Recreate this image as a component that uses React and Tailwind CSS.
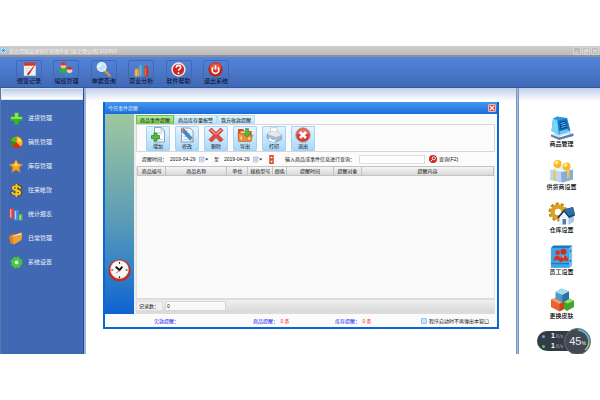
import { useState } from 'react';

const NAV = [
  ['进货管理', PlusIcon],
  ['销售管理', PieIcon],
  ['库存管理', StarIcon],
  ['往来帐款', DollarIcon],
  ['统计报表', BarsIcon],
  ['日常管理', FolderIcon],
  ['系统设置', GearIcon],
];

const TOOLS = [
  ['便签记录', NoteIcon],
  ['编班管理', PeopleIcon],
  ['单据查询', LensIcon],
  ['营业分析', ChartIcon],
  ['软件帮助', HelpIcon],
  ['退出系统', PowerIcon],
];

const SHORTCUTS = [
  ['商品管理', ComputerIcon],
  ['供货商设置', SupplierIcon],
  ['仓库设置', WarehouseIcon],
  ['员工设置', StaffIcon],
  ['更换皮肤', CubesIcon],
];

const ACTIONS = [
  ['增加', AddPageIcon],
  ['修改', EditPageIcon],
  ['删除', DeleteIcon],
  ['导出', ExportIcon],
  ['打印', PrinterIcon],
  ['退出', CloseIcon],
];

const TABS = ['商品事件提醒', '商品库存量报警', '我方收款提醒'];

const COLUMNS = [
  ['商品编号', 'w-[8%]'],
  ['商品名称', 'w-[17%]'],
  ['单位', 'w-[6%]'],
  ['规格型号', 'w-[7%]'],
  ['颜色', 'w-[4%]'],
  ['提醒时间', 'w-[13%]'],
  ['提醒对象', 'w-[8%]'],
  ['提醒内容', 'w-[37%]'],
];

function PlusIcon() {
  return (
    <svg viewBox="0 0 24 24" className="size-[13px]">
      <path d="M8 1h8v7h7v8h-7v7H8v-7H1V8h7z" fill="#35b528" />
      <path d="M9 2h6v7h7v4H2V9h7z" fill="#86e552" />
    </svg>
  );
}

function PieIcon() {
  return (
    <svg viewBox="0 0 24 24" className="size-[13px]">
      <circle cx="12" cy="12" r="11" fill="#d0301a" />
      <path d="M12 12V1a11 11 0 0 0-10.500 8z" fill="#5eb520" />
      <path d="M1.500 9 12 12 4 20A11 11 0 0 1 1.500 9" fill="#378f13" />
      <path d="M12 12V1a11 11 0 0 1 8 18.500z" fill="#f6b71c" />
      <path d="M14 3a9 9 0 0 1 7 8l-7 0z" fill="#ffdc62" />
    </svg>
  );
}

function StarIcon() {
  return (
    <svg viewBox="0 0 24 24" className="size-[14px]">
      <path d="m12 1 3.300 7.500 8 .8-6 5.400 1.800 8L12 18.500 4.900 22.700l1.800-8-6-5.400 8-.8z" fill="#f9a51a" stroke="#e88c12" />
      <path d="m12 3 2.500 6 5.500 1-8 3-8-3 5.500-1z" fill="#ffd250" />
    </svg>
  );
}

function DollarIcon() {
  return (
    <svg viewBox="0 0 24 24" className="size-[13px]">
      <g fill="none" strokeLinecap="round">
        <path d="M20 7c-2-4-14-4-15 0s14 5 15 9-14 5-17 0M13 1v22" stroke="#423413" strokeWidth="5" />
        <path d="M19 7c-2-4-13-4-14 0s14 5 14 9-13 5-15 0M12 1v22" stroke="#ffc91c" strokeWidth="3.500" />
      </g>
    </svg>
  );
}

function BarsIcon() {
  return (
    <svg viewBox="0 0 24 24" className="size-[14px]">
      <rect x="1" y="2" width="7" height="18" rx="1" fill="#e34343" />
      <rect x="9" y="5" width="7" height="18" rx="1" fill="#4495e4" />
      <rect x="17" y="12" width="6" height="11" rx="1" fill="#61bd38" />
      <path d="M3 4v14M11 7v14M19 14v8" stroke="#fff" strokeOpacity=".6" strokeWidth="2" />
    </svg>
  );
}

function FolderIcon() {
  return (
    <svg viewBox="0 0 24 24" className="size-[14px]">
      <path d="m1 8 7-4 3 2 11-4v13L8 23 2 20z" fill="#c57020" />
      <path d="m4 9 17-6-1 12-14 6z" fill="#fff0c5" />
      <path d="M1 9h6l16-4-2 11-13 7-6-3z" fill="#eda33d" />
      <path d="m1 9 6 1 1 13-6-3z" fill="#d98428" />
    </svg>
  );
}

function GearIcon() {
  return (
    <svg viewBox="0 0 24 24" className="size-[13px]">
      <circle cx="12" cy="12" r="9.500" fill="none" stroke="#3fb934" strokeWidth="4" strokeDasharray="4 3.460" />
      <circle cx="12" cy="12" r="6.500" fill="none" stroke="#4fc440" strokeWidth="6" />
      <circle cx="12" cy="12" r="3.500" fill="#e5f6e0" />
    </svg>
  );
}

function NoteIcon() {
  return (
    <svg viewBox="0 0 24 24" className="size-[15px]">
      <path d="M3 2h19v20H3z" fill="#f3f1ee" />
      <path d="M3 1h19v5H3z" fill="#d7352b" />
      <path d="m19 7-8 13-2 1 .5-3z" fill="#c91f1b" stroke="#c91f1b" />
      <path d="M5 10h8M5 14h5" stroke="#c8c8c8" />
    </svg>
  );
}

function PeopleIcon() {
  return (
    <svg viewBox="0 0 24 24" className="size-[15px]">
      <path d="M0 17c0-5 3-7 7-7s6 3 6 7z" fill="#28b92b" />
      <circle cx="7" cy="6" r="4.500" fill="#f4bd8c" />
      <path d="M2 5c1-6 9-6 10 0z" fill="#db3624" />
      <path d="M9 23c0-5 3-6 7-6s7 2 7 6z" fill="#3d7fe0" />
      <circle cx="17" cy="13" r="4.500" fill="#f9cda4" />
      <path d="M12 12c1-6 9-6 10 0z" fill="#c8301c" />
    </svg>
  );
}

function LensIcon() {
  return (
    <svg viewBox="0 0 24 24" className="size-[15px]">
      <path d="m13 13 9 9" stroke="#d59a45" strokeWidth="3.500" strokeLinecap="round" />
      <circle cx="9" cy="8" r="7" fill="#bfe3fb" stroke="#eaf5fd" strokeWidth="2" />
      <path d="M5 8c0-3 2-4 4-4" fill="none" stroke="#fff" strokeWidth="2" />
    </svg>
  );
}

function ChartIcon() {
  return (
    <svg viewBox="0 0 24 24" className="size-[15px]">
      <path d="m1 12 3-2 4 1v12H1z" fill="#e99b32" />
      <path d="m8 4 3-2 5 1v20H8z" fill="#3c8fc5" />
      <path d="m16 8 3-2 4 1v16h-7z" fill="#c9382d" />
      <path d="M2 13h3v9H2zM9 5h3v17H9zM17 9h2v13h-2z" fill="#fff" fillOpacity=".3" />
    </svg>
  );
}

function HelpIcon() {
  return (
    <svg viewBox="0 0 24 24" className="size-[15px]">
      <circle cx="12" cy="12" r="11.500" fill="#eee3e1" />
      <circle cx="12" cy="12" r="9" fill="#cf2622" />
      <path d="M8.500 9c0-5 7-4.500 7-.5 0 3-3.500 2.500-3.500 5.500M12 16.500V19" fill="none" stroke="#fff" strokeWidth="2.500" />
    </svg>
  );
}

function PowerIcon() {
  return (
    <svg viewBox="0 0 24 24" className="size-[15px]">
      <circle cx="12" cy="12" r="11.500" fill="#c0261c" />
      <ellipse cx="12" cy="8" rx="9" ry="6" fill="#e4543f" />
      <path d="M8.500 8.500a5.500 5.500 0 1 0 7 0M12 5v7" fill="none" stroke="#fff" strokeWidth="2.500" />
    </svg>
  );
}

function AddPageIcon() {
  return (
    <svg viewBox="0 0 32 32" className="size-[16px]">
      <path d="M9 1h14l6 6v23H9z" fill="#f8fbfd" stroke="#6e89a3" strokeWidth="1.500" />
      <path d="M22 1v7h7M13 12h11M13 25h12" fill="none" stroke="#9fb6cb" strokeWidth="1.500" />
      <path d="M8 12h6v5h5v6h-5v5H8v-5H3v-6h5z" fill="#57bb37" stroke="#2e8321" strokeWidth="1.500" />
    </svg>
  );
}

function EditPageIcon() {
  return (
    <svg viewBox="0 0 32 32" className="size-[16px]">
      <path d="M5 2h17l6 6v22H5z" fill="#eef6fc" stroke="#6e89a3" strokeWidth="1.500" />
      <path d="M9 8h9M9 13h14M9 19h14M9 25h14" stroke="#a9c2d8" strokeWidth="1.500" />
      <path d="m4 7 5-4 18 19 1 7-6-3z" fill="#3d8bcf" stroke="#245b94" />
      <path d="m4 7 5-4 3 3-5 5z" fill="#e1754e" />
      <path d="m22 26 5-4 1 7z" fill="#f3d19b" />
    </svg>
  );
}

function DeleteIcon() {
  return (
    <svg viewBox="0 0 32 32" className="size-[16px]">
      <path d="m7 2 9 9 9-9 5 5-9 9 9 9-5 5-9-9-9 9-5-5 9-9-9-9z" fill="#e04a3f" stroke="#c0302a" strokeWidth="1.500" />
      <path d="m7 4 9 10 9-10 2 3-9 8h-4L5 7z" fill="#f59a8f" />
    </svg>
  );
}

function ExportIcon() {
  return (
    <svg viewBox="0 0 32 32" className="size-[16px]">
      <path d="M2 4h10l3 4h14v19H2z" fill="#d24a2a" />
      <path d="M7 9h18v14H7z" fill="#fff5d4" />
      <path d="M2 12h9l3 4h17l-3 13H3z" fill="#eb8e38" stroke="#b7482a" />
      <path d="M17 3h6v9h5l-8 9-8-9h5z" fill="#58b832" stroke="#2b8420" />
      <path d="M7 19h3v6H7zM22 21h5v4h-5z" fill="#ffe49b" />
    </svg>
  );
}

function PrinterIcon() {
  return (
    <svg viewBox="0 0 32 32" className="size-[16px]">
      <path d="m9 2 12-1 3 13H9z" fill="#fff" stroke="#9cabb9" />
      <path d="m2 14 7-4h15l7 6v9l-11 5-18-8z" fill="#aeb9c5" stroke="#6f7f90" />
      <path d="m2 14 18 6 11-4-7-6H9z" fill="#e3e9ee" />
      <path d="m8 20 13 5-5 6-12-4z" fill="#fff" stroke="#7fa3c8" />
      <path d="m10 23 7 2" stroke="#4c8bd0" strokeWidth="2" />
    </svg>
  );
}

function CloseIcon() {
  return (
    <svg viewBox="0 0 32 32" className="size-[16px]">
      <circle cx="16" cy="16" r="14.500" fill="#d63b32" stroke="#b7aaa9" strokeWidth="2" />
      <path d="M4 14a12 11 0 0 1 24 0c-8 3-16 3-24 0" fill="#ea6e61" />
      <path d="m10 10 12 12m0-12L10 22" stroke="#fff" strokeWidth="5" />
    </svg>
  );
}

function ComputerIcon() {
  return (
    <svg viewBox="0 0 48 48" className="size-[24px]">
      <path d="m2 37 31-9 14 8-29 11z" fill="#c9e1f5" />
      <path d="m2 37 16 6 29-8v5L18 48 2 41z" fill="#5b7fad" />
      <path d="M6 5 14 1l20 3 7 26-24 7L3 30z" fill="#249cdb" />
      <path d="m6 5 9 4 3 28L3 30z" fill="#77d5f5" />
      <path d="m15 9 19-4 6 24-22 8z" fill="#1c76c4" />
      <path d="m19 12 12-3 4 14-14 4z" fill="#0d3f8b" />
      <path d="m21 15 9-2m-8 6 10-3m-9 7 10-3" stroke="#54c6f1" strokeWidth="2" />
      <path d="m18 31 18-5 3 5-19 6z" fill="#68c7ec" />
      <path d="m21 41 16-5" stroke="#fff" strokeWidth="2" />
    </svg>
  );
}

function SupplierIcon() {
  return (
    <svg viewBox="0 0 48 48" className="size-[24px]">
      <path d="M1 22 16 16l30 6v19l-21 6-24-5z" fill="#9fc4e8" />
      <path d="m1 22 21 3v20L1 41z" fill="#bdd9f2" />
      <path d="m22 25 24-4v20l-22 6z" fill="#86aedd" />
      <path d="m1 22 15-6 30 5-22 5z" fill="#e5f1fb" />
      <path d="M7 22h4v20l-4-1zM34 24h5v14l-2-2-3 5z" fill="#f4c433" />
      <circle cx="15" cy="10" r="8" fill="#f7b91d" />
      <circle cx="33" cy="15" r="8" fill="#f7b91d" />
      <circle cx="13" cy="7" r="4" fill="#ffe78c" />
      <circle cx="31" cy="12" r="4" fill="#ffe78c" />
    </svg>
  );
}

function WarehouseIcon() {
  return (
    <svg viewBox="0 0 54 48" className="h-[24px] w-[27px]">
      <circle cx="20" cy="20" r="16" fill="none" stroke="#b98715" strokeWidth="6" strokeDasharray="6 4.050" />
      <circle cx="20" cy="20" r="11" fill="none" stroke="#dca023" strokeWidth="9" />
      <path d="m23 30 9-11 14 11v14l-24 3z" fill="#edf4fb" />
      <path d="m41 30 11-3v12l-11 7z" fill="#a9c8e6" />
      <path d="m18 31 14-16 18-5 4 17-12 5-10-12-11 13z" fill="#1a3f68" />
      <path d="m32 15 18-5 4 14-12 4z" fill="#2f6ca6" />
      <path d="M29 34h7v11h-7z" fill="#497fb7" />
    </svg>
  );
}

function StaffIcon() {
  return (
    <svg viewBox="0 0 48 48" className="size-[23px]">
      <path d="m2 6 5-5h39v41l-5 5H2z" fill="#1678bf" />
      <path d="M2 6h38v41H2z" fill="#36a8e5" />
      <path d="M40 6 46 1v41l-6 5z" fill="#7cc3ea" />
      <circle cx="16" cy="16" r="5" fill="#e22e25" />
      <circle cx="28" cy="14" r="6" fill="#d9251e" />
      <path d="M7 33c2-12 9-14 15-6 8-10 15-4 17 7l-10-2-7 4-6-5z" fill="#df2b22" />
      <path d="m27 20 2 8-3-3z" fill="#fff" />
      <path d="M2 39h38" stroke="#1672b5" strokeWidth="2" />
      <path d="M43 10v5m0 16v5" stroke="#24618d" strokeWidth="2" />
    </svg>
  );
}

function CubesIcon() {
  return (
    <svg viewBox="0 0 48 48" className="size-[24px]">
      <path d="m24 25 12-5 12 5v13l-14 8-10-7z" fill="#43a530" />
      <path d="m24 25 12-5 12 5-13 6z" fill="#a0df69" />
      <path d="m2 23 12-4 14 8v15l-9 5L2 38z" fill="#e8622f" />
      <path d="m2 23 12-4 14 8-9 5z" fill="#ff9c65" />
      <path d="m19 32 9-5v15l-9 5z" fill="#c8431f" />
      <path d="M11 8 23 1l15 6v15l-13 7-14-7z" fill="#4b9bc8" />
      <path d="m11 8 12-7 15 6-13 7z" fill="#a6dcf0" />
      <path d="m25 14 13-7v15l-13 7z" fill="#2c719f" />
    </svg>
  );
}

function Clock() {
  return (
    <svg viewBox="0 0 48 48" className="size-[23px]">
      <circle cx="24" cy="24" r="23" fill="#bd2c25" />
      <circle cx="24" cy="22" r="19" fill="#f7f7f5" stroke="#e8aaa3" />
      <path d="M24 6v4m0 26v4M7 23h4m26 0h4" stroke="#222" strokeWidth="2.500" />
      <path d="m16 16 8 7 6-7" fill="none" stroke="#111" strokeWidth="4" />
      <path d="m24 23-7 7" stroke="#e33" strokeWidth="2" />
    </svg>
  );
}

function WindowButtons() {
  return (
    <div className="flex gap-px">
      {['最小化', '还原', '关闭'].map((name, i) => (
        <button key={name} aria-label={name} className="flex h-[8px] w-[8px] items-center justify-center rounded-[1px] border border-[#d6d6d6] bg-[#bcbcbc]">
          <svg viewBox="0 0 8 8" className="size-[6px] fill-none stroke-[#eee]">
            {i === 0 && <path d="M2 6h3" />}
            {i === 1 && <path d="M1.500 3.500h3v3h-3zM3.500 3V1.500h3v3H5" />}
            {i === 2 && <path d="m1.500 1.500 5 5m0-5-5 5" />}
          </svg>
        </button>
      ))}
    </div>
  );
}

function DateField({ label }) {
  return (
    <div className="flex w-[43px] items-center justify-between bg-white px-[2px]">
      <input aria-label={label} defaultValue="2019-04-29" className="w-[28px] bg-transparent outline-none" />
      <svg viewBox="0 0 20 14" className="h-[7px] w-[10px]">
        <path d="M1 2h9v10H1z" fill="#fff" stroke="#788ba5" />
        <path d="M1 4h9M3 7h5M3 9h5" stroke="#788ba5" />
        <path d="M12 5h7l-3.500 4z" fill="#26436c" />
      </svg>
    </div>
  );
}

function ReminderDialog() {
  const [tab, setTab] = useState(0);

  return (
    <section className="mx-[17px] mt-[14px] border-2 border-t-0 border-[#0d65d6] bg-[#fbfbfc] text-[5px] leading-[8px] text-[#111]">
      <header className="flex h-[12px] items-center justify-between bg-linear-to-b from-[#4596ef] to-[#1a6cd9] pr-px pl-[3px]">
        <h2 className="text-[#d8ebff]">今日事件提醒</h2>
        <button aria-label="关闭" className="flex h-[8px] w-[8px] items-center justify-center rounded-[1px] border border-[#e9b5b5] bg-[#d9403c]">
          <svg viewBox="0 0 8 8" className="size-[6px]"><path d="m1 1 6 6m0-6L1 7" stroke="#fff" strokeWidth="1.500" /></svg>
        </button>
      </header>

      <div className="flex h-[200px]">
        <div className="flex w-[29px] shrink-0 items-end justify-center bg-linear-to-b from-[#9fc79f] via-[#5f9fb4] via-50% to-[#0b62d2] pb-[32px]">
          <Clock />
        </div>

        <div className="flex min-w-0 flex-1 flex-col border-l-2 border-[#ececec] pr-[2px]">
          <div className="flex h-[10px] items-end">
            {TABS.map((name, i) => (
              <button
                key={name}
                onClick={() => setTab(i)}
                className={`h-[9px] border border-b-0 px-[3px] leading-[8px] ${
                  tab === i
                    ? 'border-[#6cc04c] bg-linear-to-b from-[#b9ec9d] to-[#7bd351]'
                    : 'border-[#b9def3] bg-linear-to-b from-[#e2f4fd] to-[#b5dff8]'
                }`}
              >
                {name}
              </button>
            ))}
          </div>

          <div className="flex h-[28px] gap-[5px] border border-[#d7d7d7] bg-[#fcfcfc] px-[9px] pt-px">
            {ACTIONS.map(([name, Icon]) => (
              <button key={name} className="flex h-[25px] w-[24px] shrink-0 flex-col items-center rounded-[1px] border border-[#a5d2f2] bg-linear-to-b from-[#e6f5ff] to-[#a8d8fa]">
                <Icon />
                <span className="leading-[7px]">{name}</span>
              </button>
            ))}
          </div>

          <form className="flex h-[14px] items-center whitespace-nowrap pl-[6px]" onSubmit={(e) => e.preventDefault()}>
            <span className="mr-px w-[25px]">提醒时间：</span>
            <DateField label="开始日期" />
            <span className="mx-[3px]">至</span>
            <DateField label="结束日期" />
            <svg viewBox="0 0 10 20" className="ml-[4px] h-[9px] w-[5px]">
              <rect width="10" height="20" rx="1" fill="#db4a24" />
              <path d="M3 4h4v3H3zM2 13h6l-3 4z" fill="#fff" />
            </svg>
            <label htmlFor="keyword" className="ml-[11px]">输入商品或事件信息进行查询：</label>
            <input id="keyword" className="ml-[4px] h-[9px] w-[66px] shrink border border-[#dedede] bg-white px-[2px] outline-none" />
            <button className="ml-[4px] flex items-center gap-[2px]">
              <svg viewBox="0 0 16 16" className="size-[8px]">
                <circle cx="8" cy="8" r="8" fill="#c9261e" />
                <circle cx="9.500" cy="6.500" r="3.200" fill="none" stroke="#fff" strokeWidth="1.800" />
                <path d="m7 9-4 4" stroke="#fff" strokeWidth="2" />
              </svg>
              查询(F2)
            </button>
          </form>

          <div className="flex-1 border-x border-[#e2e2e2] bg-[#fafafa]">
            <table className="w-full table-fixed border-collapse">
              <thead>
                <tr className="h-[9px] bg-linear-to-b from-[#f5f5f5] to-[#d6d6d6]">
                  {COLUMNS.map(([name, width]) => (
                    <th key={name} className={`border border-[#c3c3c3] p-0 text-center font-normal leading-[8px] whitespace-nowrap ${width}`}>
                      {name}
                    </th>
                  ))}
                </tr>
              </thead>
              <tbody />
            </table>
          </div>

          <div className="flex h-[16px] items-center border-y-2 border-[#dcdcdc] bg-linear-to-b from-[#f0f0f0] to-[#d9d9d9]">
            <span className="w-[27px] border border-[#dedede] bg-[#f1f1f1] pl-[2px]">记录数：</span>
            <output className="ml-[2px] w-[61px] border border-[#d6d6d6] bg-[#f8f8f8] pl-px">0</output>
          </div>
        </div>
      </div>

      <footer className="flex h-[13px] items-center whitespace-nowrap text-[#1010f0]">
        <span className="ml-[49px] w-[99px]">欠款提醒：</span>
        <span className="w-[82px]">商品提醒： <span className="ml-px text-[#f22]">0 条</span></span>
        <span>库存提醒： <span className="ml-px text-[#f22]">0 条</span></span>
        <label className="mr-[8px] ml-auto flex items-center gap-[2px] text-[#111]">
          <input type="checkbox" className="size-[6px] appearance-none rounded-[1px] border border-[#8fc3ea] bg-[#c9e6fa] checked:bg-[#3a8fd8]" />
          程序启动时不再弹出本窗口
        </label>
      </footer>
    </section>
  );
}

function SpeedRow({ dot }) {
  return (
    <span className="flex items-center gap-[6px]">
      <i className={`size-[3px] rounded-full ${dot}`} />
      <span><b>1</b><small className="ml-px text-[5px] text-[#a3a9b1]">K/s</small></span>
    </span>
  );
}

function SpeedBall() {
  return (
    <div className="absolute right-[9px] bottom-0 flex h-[26px] w-[54px] items-center overflow-hidden text-white">
      <div className="flex h-[20px] w-[38px] flex-col justify-center rounded-l-full bg-[#343b46] pl-[5px] text-[7px] leading-[9px]">
        <SpeedRow dot="bg-[#46b8f2]" />
        <SpeedRow dot="bg-[#43cf4d]" />
      </div>
      <div className="absolute top-0 right-0 flex size-[27px] items-center justify-center rounded-full border border-[#687079] bg-[#414954] text-[11px] leading-none text-[#eee]">
        45<small className="mt-[4px] text-[5px]">%</small>
        <svg viewBox="0 0 27 27" className="absolute -inset-px size-[27px]">
          <path d="M14 2a11.500 11.500 0 0 1 11 11" fill="none" stroke="#4fc3d0" strokeWidth="1.500" />
          <path d="M25 13a11.500 11.500 0 0 1-4 9" fill="none" stroke="#9fce7c" strokeWidth="1.500" />
        </svg>
      </div>
    </div>
  );
}

export default function App() {
  return (
    <div className="bg-white pt-[46px] font-['Liberation_Sans','Noto_Sans_CJK_SC',sans-serif] text-[6px] leading-[8px]">
      <header className="flex h-[11px] items-center justify-between border-b-2 border-[#8b8f96] bg-linear-to-b from-[#cfcfcf] to-[#bababa] pr-px">
        <div className="flex items-center gap-[2px]">
          <svg viewBox="0 0 16 16" className="size-[7px]">
            <circle cx="8" cy="8" r="7.500" fill="#e4f4ff" stroke="#54a8e7" />
            <path d="M8 2v12M2 8h12M4 4l8 8m0-8-8 8" stroke="#2d8fdc" strokeWidth="1.500" />
          </svg>
          <h1 className="text-[5px] text-[#f2f2f2]">易企用服装进销存管理系统 [易企用公司] 2019V2</h1>
        </div>
        <WindowButtons />
      </header>

      <nav className="h-[31px] border-b border-[#3458a0] bg-linear-to-b from-[#5384dc] to-[#416ab6] pt-[3px] pl-[16px]">
        <div className="flex w-[213px] justify-between">
          {TOOLS.map(([name, Icon]) => (
            <button key={name} className="flex h-[26px] w-[26px] flex-col items-center rounded-[2px] border border-[#4268ae] pt-px whitespace-nowrap text-[#040a1c]">
              <Icon />
              <span>{name}</span>
            </button>
          ))}
        </div>
      </nav>

      <div className="flex min-h-[266px]">
        <aside className="w-[83px] shrink-0 border-l border-[#5c78aa] bg-[#4169b3]">
          <div className="h-[12px] border border-[#d9e4f5] bg-linear-to-b from-[#bccbe6] to-white" />
          <nav className="mt-[6px] flex flex-col pl-[8px]">
            {NAV.map(([name, Icon]) => (
              <a key={name} href="#" className="flex h-[24px] items-center gap-[5px] text-[#eef4ff]">
                <span className="flex w-[14px] justify-center"><Icon /></span>
                {name}
              </a>
            ))}
          </nav>
        </aside>
        <div className="w-[3px] shrink-0 border-l border-[#2449a0] bg-[#9fb2dc]" />

        <main className="min-w-0 flex-1 bg-linear-to-b from-[#c0cee8] to-white to-[13px]">
          <ReminderDialog />
        </main>
        <div className="w-[3px] shrink-0 border-x border-[#7b93c6] bg-[#a9bbe0]" />

        <aside className="relative w-[81px] shrink-0 bg-linear-to-b from-[#c0cee8] to-white to-[13px]">
          <div className="flex flex-col pt-[28px] pl-[4px]">
            {SHORTCUTS.map(([name, Icon]) => (
              <button key={name} className="flex h-[43px] flex-col items-center text-black">
                <Icon />
                <span className="font-medium">{name}</span>
              </button>
            ))}
          </div>
          <SpeedBall />
        </aside>
      </div>
    </div>
  );
}
